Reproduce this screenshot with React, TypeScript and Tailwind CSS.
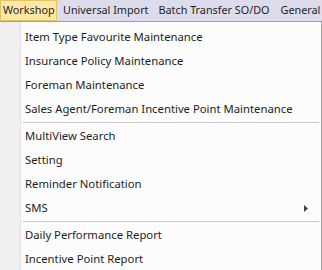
export default function App() {
  const groups = [
    [
      'Item Type Favourite Maintenance',
      'Insurance Policy Maintenance',
      'Foreman Maintenance',
      'Sales Agent/Foreman Incentive Point Maintenance',
    ],
    ['MultiView Search', 'Setting', 'Reminder Notification', 'SMS'],
    ['Daily Performance Report', 'Incentive Point Report'],
  ];

  return (
    <div
      className="w-[322px] h-[270px] overflow-hidden bg-white text-[11.3px] text-[#1e1e1e]"
      style={{ fontFamily: '"Noto Sans", "Open Sans", sans-serif' }}
    >
      {/* menu bar */}
      <div className="flex h-[21px] bg-[#dcdcec] whitespace-nowrap text-[10.8px]">
        <div className="flex items-center w-[57px] pl-[2px] bg-[#ffe8a6] border border-[#e5c365]">Workshop</div>
        <div className="flex items-center pl-[6px] pr-[5px]">Universal Import</div>
        <div className="flex items-center pl-[5px] pr-[6px]">Batch Transfer SO/DO</div>
        <div className="flex items-center pl-[5px]">General</div>
      </div>

      {/* dropdown */}
      <div className="flex h-[249px] border-t border-r border-[#a0a0a0] bg-[#fcfcfc]">
        <div className="w-[21px] bg-[#f0f0f0] border-r border-[#e2e2e2] shrink-0" />
        <div className="flex-1 pt-[3px]">
          {groups.map((g, gi) => (
            <div key={gi}>
              {gi > 0 && (
                <div className="h-[3px] flex items-center pl-[2px] pr-[2px]">
                  <div className="h-px w-full bg-[#c8c8c8]" />
                </div>
              )}
              {g.map((item) => (
                <div key={item} className="h-[24px] flex items-center pl-[4px] pr-[12px] justify-between whitespace-nowrap">
                  <span>{item}</span>
                  {item === 'SMS' && (
                    <svg width="4" height="7" viewBox="0 0 4 7" className="mr-[1px]">
                      <path d="M0 0 L4 3.5 L0 7 Z" fill="#404040" />
                    </svg>
                  )}
                </div>
              ))}
            </div>
          ))}
        </div>
      </div>
    </div>
  );
}
